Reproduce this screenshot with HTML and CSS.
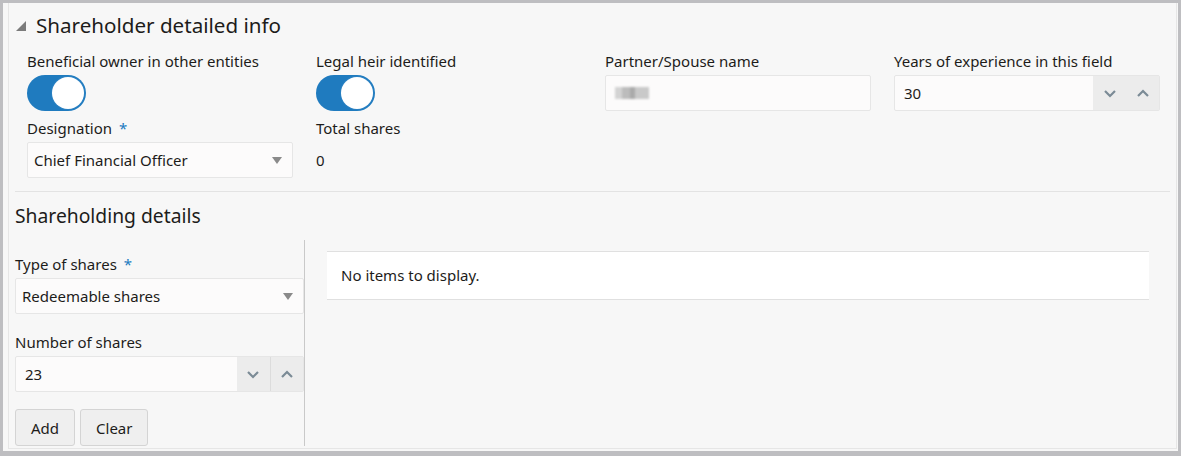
FILE: index.html
```html
<!DOCTYPE html>
<html lang="en">
<head>
  <meta charset="UTF-8" />
  <meta name="viewport" content="width=device-width, initial-scale=1.0"/>
  <title>Shareholder detailed info</title>
  <link rel="stylesheet" href="styles.css">
</head>
<body>
  <div class="frame">
    <div class="panel">
      <div class="collapsible-head">
        <svg class="caret" width="11" height="11" viewBox="0 0 11 11"><polygon points="10,0 10,10 0,10" fill="#7b7b7b"/></svg>
        <h2>Shareholder detailed info</h2>
      </div>

      <div class="form-grid">
        <div class="field">
          <label>Beneficial owner in other entities</label>
          <div class="switch on"><span class="knob"></span></div>
        </div>
        <div class="field">
          <label>Legal heir identified</label>
          <div class="switch on"><span class="knob"></span></div>
        </div>
        <div class="field">
          <label>Partner/Spouse name</label>
          <div class="text-input"><span class="masked"></span></div>
        </div>
        <div class="field">
          <label>Years of experience in this field</label>
          <div class="text-input number">
            <span class="value">30</span>
            <div class="spin">
              <svg width="14" height="9" viewBox="0 0 14 9"><polyline points="2,2 7,7 12,2" fill="none" stroke="#7b8b96" stroke-width="2.2"/></svg>
              <svg width="14" height="9" viewBox="0 0 14 9"><polyline points="2,7 7,2 12,7" fill="none" stroke="#7b8b96" stroke-width="2.2"/></svg>
            </div>
          </div>
        </div>
        <div class="field">
          <label>Designation <span class="req">*</span></label>
          <div class="text-input select">
            <span class="value">Chief Financial Officer</span>
            <span class="arrow"></span>
          </div>
        </div>
        <div class="field">
          <label>Total shares</label>
          <div class="readonly">0</div>
        </div>
      </div>

      <div class="divider"></div>

      <h3>Shareholding details</h3>
      <div class="holding">
        <div class="holding-form">
          <div class="field">
            <label>Type of shares <span class="req">*</span></label>
            <div class="text-input select">
              <span class="value">Redeemable shares</span>
              <span class="arrow"></span>
            </div>
          </div>
          <div class="field">
            <label>Number of shares</label>
            <div class="text-input number">
              <span class="value">23</span>
              <div class="spin">
                <span class="spin-btn"><svg width="14" height="9" viewBox="0 0 14 9"><polyline points="2,2 7,7 12,2" fill="none" stroke="#7b8b96" stroke-width="2.2"/></svg></span>
                <span class="spin-btn"><svg width="14" height="9" viewBox="0 0 14 9"><polyline points="2,7 7,2 12,7" fill="none" stroke="#7b8b96" stroke-width="2.2"/></svg></span>
              </div>
            </div>
          </div>
          <div class="actions">
            <button>Add</button>
            <button>Clear</button>
          </div>
        </div>
        <div class="holding-table">
          <div class="empty">No items to display.</div>
        </div>
      </div>
    </div>
  </div>
</body>
</html>
```

FILE: styles.css
```css
html, body {
  margin: 0;
  height: 100%;
}
body {
  font-family: "Noto Sans", "Open Sans", sans-serif;
  background-color: #bebec1;
  color: #1d1c1a;
  font-size: 15px;
}
.frame {
  box-sizing: border-box;
  height: 448px;
  margin: 3px 3px 0 3px;
  background-color: #f7f7f7;
  padding: 0 1px 2px 5px;
}
.panel {
  box-sizing: border-box;
  height: 100%;
  border: 1px solid #e6e6e6;
  border-top: none;
  padding-left: 6px;
}
.collapsible-head {
  display: flex;
  align-items: center;
  height: 44px;
  margin-bottom: 4px;
  padding-left: 1px;
}
.caret {
  margin-top: 2px;
  margin-right: 9px;
}
h2 {
  margin: 0;
  font-size: 20.6px;
  font-weight: normal;
}
.form-grid {
  display: grid;
  grid-template-columns: repeat(4, 266px);
  column-gap: 23px;
  padding-left: 12px;
}
.field label {
  display: block;
  height: 20px;
  line-height: 20px;
  margin-bottom: 4px;
  white-space: nowrap;
}
.form-grid .field:nth-child(n+5) label {
  margin-top: 7px;
}
.req {
  color: #227bbf;
  margin-left: 3px;
}
.switch {
  width: 59px;
  height: 36px;
  border-radius: 18px;
  background-color: #1f7bbf;
  position: relative;
}
.switch .knob {
  position: absolute;
  right: 2px;
  top: 2px;
  width: 32px;
  height: 32px;
  border-radius: 50%;
  background-color: #fff;
  box-shadow: 0 0 0 1px #2a80c2;
}
.text-input {
  box-sizing: border-box;
  height: 36px;
  display: flex;
  align-items: center;
  background-color: #fcfbfb;
  border: 1px solid #e6e6e6;
  border-radius: 2px;
  padding-left: 9px;
}
.text-input .value {
  flex: 1;
}
.masked {
  width: 34px;
  height: 12px;
  background: linear-gradient(90deg, #d3d3d3 0 20%, #bcbcbc 20% 45%, #aaa 45% 60%, #c9c9c9 60% 100%);
  filter: blur(1px);
}
.spin {
  display: flex;
  align-self: stretch;
  align-items: center;
  justify-content: space-around;
  width: 66px;
  background-color: #ececec;
}
.spin-btn {
  flex: 1;
  height: 100%;
  display: flex;
  align-items: center;
  justify-content: center;
}
.spin-btn + .spin-btn {
  border-left: 1px solid #dcdcdc;
}
.select {
  padding-left: 6px;
  padding-right: 10px;
}
.arrow {
  width: 0;
  height: 0;
  border-left: 5px solid transparent;
  border-right: 5px solid transparent;
  border-top: 7px solid #8a8a8a;
}
.readonly {
  height: 36px;
  line-height: 36px;
}
.divider {
  height: 1px;
  background-color: #e3e3e3;
  margin: 13px 6px 0 0;
}
h3 {
  margin: 11px 0 0 0;
  font-size: 19.3px;
  font-weight: normal;
  line-height: 26px;
}
.holding {
  display: flex;
  margin-top: 11px;
}
.holding-form {
  width: 289px;
  border-right: 1px solid #c9c9c9;
  padding-top: 14px;
}
.holding-form .field + .field {
  margin-top: 18px;
}
.actions {
  display: flex;
  gap: 5px;
  margin-top: 17px;
}
button {
  font-family: inherit;
  font-size: 15px;
  color: #1d1c1a;
  height: 37px;
  padding: 0 15px;
  background-color: #efefef;
  border: 1px solid #d4d4d4;
  border-radius: 3px;
}
.holding-table {
  flex: 1;
  padding: 11px 27px 0 22px;
}
.empty {
  background-color: #fff;
  border-top: 1px solid #e0e0e0;
  border-bottom: 1px solid #e0e0e0;
  height: 47px;
  line-height: 47px;
  padding-left: 14px;
}
```
